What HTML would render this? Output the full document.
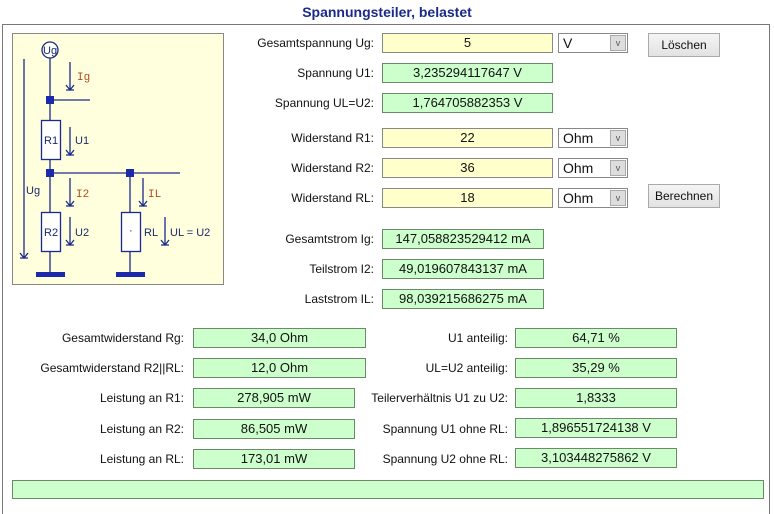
<!DOCTYPE html>
<html><head><meta charset="utf-8"><style>
*{margin:0;padding:0;box-sizing:border-box}
body{width:774px;height:501px;background:#fff;position:relative;overflow:hidden;font-family:"Liberation Sans",Arial,sans-serif;font-size:12px;color:#111}
.a{position:absolute}
.t{left:0;width:774px;top:4px;text-align:center;font-weight:bold;font-size:14px;color:#1a2a8a}
.frame{left:2px;top:24px;width:768px;height:490px;border:1px solid #777;border-bottom:none}
.l{position:absolute;text-align:right;line-height:19px;font-size:12px}
.b{position:absolute;height:20px;border:1px solid #6a8a6a;text-align:center;line-height:18px;font-size:13px}
.y{background:#ffffcc;border-color:#888}
.g{background:#ccffcc}
.s{position:absolute;height:20px;width:70px;border:1px solid #888;background:#fff;font-size:14px;line-height:18px;padding-left:4px}
.s i{position:absolute;right:1px;top:1px;width:16px;height:16px;background:#ddd;border:1px solid #aaa;font-style:normal;font-size:9px;text-align:center;line-height:14px;color:#555}
.btn{position:absolute;width:72px;height:24px;border:1px solid #aaa;background:linear-gradient(#f4f4f4,#e2e2e2);font-size:12px;text-align:center;line-height:22px}
</style></head><body>
<div class="a t">Spannungsteiler, belastet</div>
<div class="a frame"></div>
<svg class="a" style="left:0;top:0" width="240" height="290">
<rect x="12.5" y="33.5" width="211" height="251" fill="#ffffdd" stroke="#888"/>
<g stroke="#1a2a8a" stroke-width="1.3" fill="none">
<circle cx="50" cy="50" r="8" fill="#fff"/>
<line x1="50" y1="58" x2="50" y2="120"/><line x1="50" y1="100" x2="90" y2="100"/>
<rect x="41.5" y="120.5" width="19" height="39" fill="#fff"/>
<line x1="50" y1="160" x2="50" y2="212"/><line x1="50" y1="173" x2="180" y2="173"/>
<line x1="130" y1="173" x2="130" y2="212"/>
<rect x="41.5" y="212.5" width="19" height="39" fill="#fff"/>
<rect x="121.5" y="212.5" width="19" height="39" fill="#fff"/>
<line x1="50" y1="252" x2="50" y2="272"/><line x1="130" y1="252" x2="130" y2="272"/>
<line x1="24" y1="59" x2="24" y2="258"/><path d="M20 253 L24 258 L28 253 M20 258 H28"/>
<line x1="70" y1="62" x2="70" y2="90"/><path d="M66 85 L70 90 L74 85 M66 90 H74"/>
<line x1="70" y1="127" x2="70" y2="155"/><path d="M66 150 L70 155 L74 150 M66 155 H74"/>
<line x1="70" y1="178" x2="70" y2="206"/><path d="M66 201 L70 206 L74 201 M66 206 H74"/>
<line x1="70" y1="217" x2="70" y2="245"/><path d="M66 240 L70 245 L74 240 M66 245 H74"/>
<line x1="143" y1="178" x2="143" y2="206"/><path d="M139 201 L143 206 L147 201 M139 206 H147"/>
<line x1="165" y1="217" x2="165" y2="245"/><path d="M161 240 L165 245 L169 240 M161 245 H169"/>
</g>
<g fill="#1a2aaa"><rect x="46" y="96" width="8" height="8"/><rect x="46" y="169" width="8" height="8"/><rect x="126" y="169" width="8" height="8"/>
<rect x="36" y="272" width="29" height="5"/><rect x="116" y="272" width="29" height="5"/></g>
<g font-family="Liberation Sans,sans-serif" font-size="11" fill="#1a2a6a">
<text x="43" y="54">Ug</text><text x="26" y="194">Ug</text><text x="44" y="144">R1</text><text x="44" y="236">R2</text>
<text x="75" y="144">U1</text><text x="75" y="236">U2</text><text x="144" y="236">RL</text><text x="170" y="236">UL = U2</text><text x="129" y="234">·</text>
</g>
<g font-family="Liberation Mono,monospace" font-size="11" fill="#b04a20"><text x="77" y="80">Ig</text><text x="76" y="197">I2</text><text x="148" y="197">IL</text></g>
</svg>

<div class="l" style="left:200px;width:174px;top:34px">Gesamtspannung Ug:</div>
<div class="b y" style="left:382px;top:33px;width:171px">5</div>
<div class="s" style="left:558px;top:33px">V<i>v</i></div>
<div class="btn" style="left:648px;top:33px">Löschen</div>
<div class="l" style="left:200px;width:174px;top:64px">Spannung U1:</div>
<div class="b g" style="left:382px;top:63px;width:171px">3,235294117647 V</div>
<div class="l" style="left:200px;width:174px;top:94px">Spannung UL=U2:</div>
<div class="b g" style="left:382px;top:93px;width:171px">1,764705882353 V</div>

<div class="l" style="left:200px;width:174px;top:129px">Widerstand R1:</div>
<div class="b y" style="left:382px;top:128px;width:171px">22</div>
<div class="s" style="left:558px;top:128px">Ohm<i>v</i></div>
<div class="l" style="left:200px;width:174px;top:159px">Widerstand R2:</div>
<div class="b y" style="left:382px;top:158px;width:171px">36</div>
<div class="s" style="left:558px;top:158px">Ohm<i>v</i></div>
<div class="l" style="left:200px;width:174px;top:189px">Widerstand RL:</div>
<div class="b y" style="left:382px;top:188px;width:171px">18</div>
<div class="s" style="left:558px;top:188px">Ohm<i>v</i></div>
<div class="btn" style="left:648px;top:184px">Berechnen</div>

<div class="l" style="left:200px;width:174px;top:230px">Gesamtstrom Ig:</div>
<div class="b g" style="left:382px;top:229px;width:162px">147,058823529412 mA</div>
<div class="l" style="left:200px;width:174px;top:260px">Teilstrom I2:</div>
<div class="b g" style="left:382px;top:259px;width:162px">49,019607843137 mA</div>
<div class="l" style="left:200px;width:174px;top:290px">Laststrom IL:</div>
<div class="b g" style="left:382px;top:289px;width:162px">98,039215686275 mA</div>

<div class="l" style="left:10px;width:174px;top:329px">Gesamtwiderstand Rg:</div>
<div class="b g" style="left:193px;top:328px;width:173px">34,0 Ohm</div>
<div class="l" style="left:10px;width:174px;top:359px">Gesamtwiderstand R2||RL:</div>
<div class="b g" style="left:193px;top:358px;width:173px">12,0 Ohm</div>
<div class="l" style="left:10px;width:174px;top:389px">Leistung an R1:</div>
<div class="b g" style="left:193px;top:388px;width:162px">278,905 mW</div>
<div class="l" style="left:10px;width:174px;top:420px">Leistung an R2:</div>
<div class="b g" style="left:193px;top:419px;width:162px">86,505 mW</div>
<div class="l" style="left:10px;width:174px;top:450px">Leistung an RL:</div>
<div class="b g" style="left:193px;top:449px;width:162px">173,01 mW</div>

<div class="l" style="left:330px;width:178px;top:329px">U1 anteilig:</div>
<div class="b g" style="left:515px;top:328px;width:162px">64,71 %</div>
<div class="l" style="left:330px;width:178px;top:359px">UL=U2 anteilig:</div>
<div class="b g" style="left:515px;top:358px;width:162px">35,29 %</div>
<div class="l" style="left:330px;width:178px;top:389px">Teilerverhältnis U1 zu U2:</div>
<div class="b g" style="left:515px;top:388px;width:162px">1,8333</div>
<div class="l" style="left:330px;width:178px;top:420px">Spannung U1 ohne RL:</div>
<div class="b g" style="left:515px;top:418px;width:162px">1,896551724138 V</div>
<div class="l" style="left:330px;width:178px;top:450px">Spannung U2 ohne RL:</div>
<div class="b g" style="left:515px;top:448px;width:162px">3,103448275862 V</div>

<div class="b g" style="left:12px;top:480px;width:752px;height:19px"></div>
</body></html>
